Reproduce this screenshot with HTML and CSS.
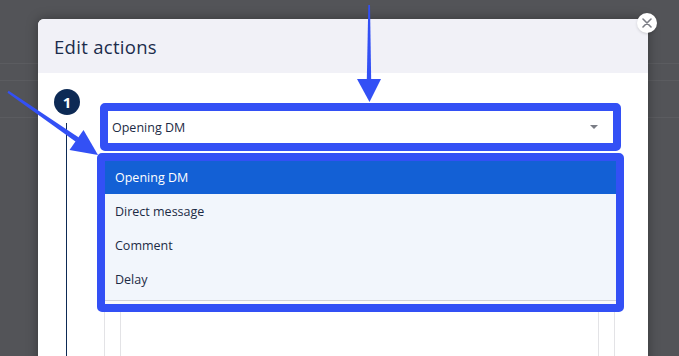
FILE: index.html
```html
<!DOCTYPE html>
<html lang="en">
<head>
    <meta charset="UTF-8">
    <meta name="viewport" content="width=device-width, initial-scale=1.0">
    <title>Edit actions</title>
    <link rel="stylesheet" href="styles.css">
</head>
<body>
    <div class="backdrop">
        <div class="modal">
            <button class="close-btn" aria-label="Close">
                <svg width="10" height="10" viewBox="0 0 10 10"><path d="M1 1L9 9M9 1L1 9" stroke="#7b7d85" stroke-width="1.6" stroke-linecap="round"/></svg>
            </button>
            <div class="modal-header">
                <h2>Edit actions</h2>
            </div>
            <div class="modal-body">
                <div class="step">
                    <div class="step-rail">
                        <span class="step-num">1</span>
                        <span class="rail-line"></span>
                    </div>
                    <div class="step-main">
                        <div class="mark mark-select">
                            <div class="select">
                                <span>Opening DM</span>
                                <span class="caret"></span>
                            </div>
                        </div>
                        <div class="card">
                            <div class="card-inner"></div>
                        </div>
                        <!-- open dropdown -->
                        <div class="mark mark-menu">
                            <ul class="menu">
                                <li class="option selected">Opening DM</li>
                                <li class="option">Direct message</li>
                                <li class="option">Comment</li>
                                <li class="option">Delay</li>
                            </ul>
                        </div>
                    </div>
                </div>
            </div>
        </div>

        <!-- annotation arrows -->
        <svg class="arrows" width="679" height="356" viewBox="0 0 679 356">
            <polygon points="368.3,5 370,5 371.2,80 366.8,80" fill="#3350f5"/>
            <polygon points="357,79 381,79 369.5,102" fill="#3350f5"/>
            <polygon points="7.5,92.8 8.6,90.8 78.8,137.6 75.8,141.8" fill="#3350f5"/>
            <polygon points="69.5,150 83.5,130 98,155" fill="#3350f5"/>
        </svg>
    </div>
</body>
</html>
```

FILE: styles.css
```css
body {
    margin: 0;
    font-family: "Open Sans", Arial, sans-serif;
    color: #1c2b45;
    overflow: hidden;
}

.backdrop {
    position: relative;
    height: 356px;
    overflow: hidden;
    background-color: #535458;
    background-image:
        linear-gradient(#5b5c60, #5b5c60),
        linear-gradient(#5b5c60, #5b5c60),
        linear-gradient(#5b5c60, #5b5c60);
    background-size: 100% 1px;
    background-position: 0 63px, 0 80px, 0 117px;
    background-repeat: no-repeat;
    display: flex;
    align-items: flex-start;
    padding: 19px 0 0 38px;
    box-sizing: border-box;
}

.modal {
    position: relative;
    flex-shrink: 0;
    width: 610px;
    height: 400px;
    background: #fff;
    border-radius: 6px 6px 0 0;
    box-shadow: 0 0 12px rgba(0, 0, 0, 0.35);
    display: flex;
    flex-direction: column;
}

.close-btn {
    position: absolute;
    top: -6px;
    right: -9px;
    width: 20px;
    height: 20px;
    padding: 0;
    border: none;
    border-radius: 50%;
    background: #fff;
    display: flex;
    align-items: center;
    justify-content: center;
    box-shadow: 0 1px 3px rgba(0, 0, 0, 0.15);
}

.modal-header {
    flex-shrink: 0;
    height: 54px;
    box-sizing: border-box;
    background: #f1f1f7;
    border-radius: 6px 6px 0 0;
    display: flex;
    align-items: center;
    padding: 0 16px;
}

.modal-header h2 {
    margin: 0;
    font-size: 18.5px;
    font-weight: 500;
    color: #1b2c4b;
    letter-spacing: 0.3px;
}

.modal-body {
    flex: 1;
    min-height: 0;
    overflow: hidden;
    padding: 16px 0 0 16px;
    display: flex;
}

.step {
    display: flex;
    flex: 1;
}

.step-rail {
    width: 50px;
    display: flex;
    flex-direction: column;
}

.step-num {
    width: 26px;
    height: 26px;
    border-radius: 50%;
    background: #0d2a55;
    color: #fff;
    font-size: 15px;
    font-weight: 700;
    display: flex;
    align-items: center;
    justify-content: center;
}

.rail-line {
    flex: 1;
    width: 1px;
    margin: 8px 0 0 12px;
    background: #0d2a55;
}

.step-main {
    position: relative;
    width: 511px;
    margin-top: 14px;
}

.mark {
    border: 8px solid #3350f5;
    border-radius: 5px;
}

.mark-select {
    margin: 0 -6px 0 -4px;
}

.select {
    height: 32px;
    background: #fff;
    display: flex;
    align-items: center;
    justify-content: space-between;
    padding: 0 15px 0 4px;
    font-size: 12.5px;
}

.caret {
    width: 0;
    height: 0;
    border-left: 4.5px solid transparent;
    border-right: 4.5px solid transparent;
    border-top: 4.5px solid #7a7d85;
}

.card {
    margin-top: 8px;
    height: 300px;
    border: 1px solid #e3e3e6;
    border-radius: 4px;
    padding: 0 15px;
}

.card-inner {
    height: 100%;
    border-left: 1px solid #e3e3e6;
    border-right: 1px solid #e3e3e6;
}

.mark-menu {
    position: absolute;
    top: 50px;
    left: -7px;
    width: 511px;
    height: 143px;
    background: #fafafa;
}

.menu {
    list-style: none;
    margin: 0;
    padding: 0 0 4px;
    background: #f2f6fc;
    border-bottom: 1px solid #d2d2d6;
}

.option {
    height: 34px;
    display: flex;
    align-items: center;
    padding-left: 10px;
    font-size: 12.5px;
    color: #1c2b45;
}

.option.selected {
    height: 33px;
    background: #1360d5;
    color: #fff;
}

.arrows {
    position: absolute;
    top: 0;
    left: 0;
    pointer-events: none;
}
```
